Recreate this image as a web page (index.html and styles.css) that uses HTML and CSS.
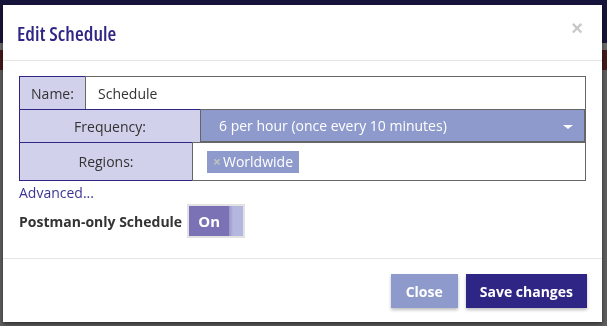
FILE: index.html
```html
<!DOCTYPE html>
<html lang="en">
<head>
  <meta charset="UTF-8">
  <title>Edit Schedule</title>
  <link rel="stylesheet" href="styles.css">
</head>
<body>

  <!-- page behind the modal -->
  <div class="page">
    <div class="page-nav"></div>
    <div class="page-strip"></div>
    <div class="page-banner"></div>
    <div class="page-body"></div>
  </div>
  <div class="backdrop"></div>

  <div class="modal">
    <div class="modal-header">
      <h4 class="modal-title">Edit Schedule</h4>
      <button class="close-x" title="Close">&times;</button>
    </div>

    <div class="modal-body">
      <div class="field-row">
        <span class="addon addon-name">Name:</span>
        <input class="field-input" type="text" value="Schedule">
      </div>
      <div class="field-row">
        <span class="addon addon-freq">Frequency:</span>
        <div class="field-select">
          <span>6 per hour (once every 10 minutes)</span>
          <span class="caret"></span>
        </div>
      </div>
      <div class="field-row field-row-tall">
        <span class="addon addon-regions">Regions:</span>
        <div class="field-input tags">
          <span class="tag"><span class="tag-x">&times;</span>Worldwide</span>
        </div>
      </div>

      <a class="advanced" href="#">Advanced...</a>

      <div class="toggle-row">
        <span class="toggle-label">Postman-only Schedule</span>
        <span class="toggle">
          <span class="toggle-on">On</span>
          <span class="toggle-off"></span>
        </span>
      </div>
    </div>

    <div class="modal-footer">
      <button class="btn btn-light">Close</button>
      <button class="btn btn-dark">Save changes</button>
    </div>
  </div>

</body>
</html>
```

FILE: styles.css
```css
:root {
  --navy: #2e2585;
  --lavender: #d1d1ec;
  --periwinkle: #8e9acb;
  --text: #333333;
  --line: #e5e5e5;
}

html, body { margin: 0; height: 100%; }
body {
  font-family: "Open Sans", "Liberation Sans", sans-serif;
  font-size: 14px;
  color: var(--text);
  overflow: hidden;
}

/* ---------- page behind ---------- */
.page { height: 100%; background: #bcbcbc; }
.page-nav { height: 43px; background: #2f2878; }
.page-strip { height: 7px; background: #d6d6d6; }
.page-banner { height: 20px; background: #8a3233; }
.backdrop {
  position: fixed;
  inset: 0;
  background: rgba(0, 0, 0, 0.5);
}

/* ---------- modal ---------- */
.modal {
  position: fixed;
  left: 3px;
  top: 5px;
  width: 599px;
  height: 317px;
  background: #fff;
  box-shadow: 0 2px 4px rgba(0, 0, 0, 0.5);
  display: flex;
  flex-direction: column;
}

.modal-header {
  display: flex;
  align-items: center;
  justify-content: space-between;
  height: 55px;
  padding: 0 19px 0 14px;
  border-bottom: 1px solid var(--line);
}
.modal-title {
  margin: 0;
  font-size: 20px;
  font-weight: 600;
  font-stretch: 82%;
  letter-spacing: 0.1px;
  color: var(--navy);
  padding-top: 1px;
}
.close-x {
  border: none;
  background: none;
  padding: 0;
  margin-top: -8px;
  font-family: "Liberation Sans", sans-serif;
  font-size: 20px;
  font-weight: bold;
  color: #c8c8c8;
}

.modal-body {
  flex: 1;
  padding: 15px 16px 0;
}

/* ---------- input rows ---------- */
.field-row {
  display: flex;
  height: 34px;
  margin-top: -1px;
}
.field-row:first-child { margin-top: 0; }
.field-row-tall { height: 39px; }

.addon {
  display: flex;
  align-items: center;
  justify-content: center;
  flex: none;
  box-sizing: border-box;
  background: var(--lavender);
  border: 1px solid var(--navy);
  border-right: none;
  color: var(--text);
}
.addon-name { width: 66px; }
.addon-freq { width: 181px; }
.addon-regions { width: 173px; }

.field-input {
  flex: 1;
  box-sizing: border-box;
  height: 100%;
  border: 1px solid #666;
  padding: 0 12px;
  font: inherit;
  color: var(--text);
  outline: none;
}

.field-select {
  flex: 1;
  display: flex;
  align-items: center;
  justify-content: space-between;
  box-sizing: border-box;
  background: var(--periwinkle);
  border: 1px solid #666;
  border-width: 1px 2px 2px 1px;
  padding: 0 11px 0 18px;
  color: #fff;
}
.caret {
  width: 0;
  height: 0;
  border-left: 5px solid transparent;
  border-right: 5px solid transparent;
  border-top: 4px solid #fff;
  margin-top: 2px;
}

.tags {
  display: flex;
  align-items: center;
  padding: 0 14px;
}
.tag {
  display: inline-flex;
  align-items: center;
  height: 22px;
  padding: 0 6px;
  background: var(--periwinkle);
  color: #fff;
}
.tag-x {
  color: #c0c0c0;
  font-weight: bold;
  margin-right: 2px;
}

.advanced {
  display: inline-block;
  margin-top: 2px;
  color: #3c3596;
  text-decoration: none;
  line-height: 20px;
}

/* ---------- toggle ---------- */
.toggle-row {
  display: flex;
  align-items: center;
  gap: 5px;
  margin-top: 1px;
}
.toggle-label { font-weight: bold; }
.toggle {
  display: flex;
  height: 30px;
  border: 2px solid #e2e2e2;
}
.toggle-on {
  width: 40px;
  display: flex;
  align-items: center;
  justify-content: center;
  background: #7b72b6;
  color: #fff;
  font-weight: bold;
  font-size: 15px;
}
.toggle-off {
  width: 14px;
  background: linear-gradient(to right, #9b94cb, #b5b8de 30%);
}

/* ---------- footer ---------- */
.modal-footer {
  display: flex;
  justify-content: flex-end;
  gap: 8px;
  padding: 15px 15px 14px;
  border-top: 1px solid var(--line);
}
.btn {
  height: 34px;
  border: none;
  padding: 0 14px;
  font-family: inherit;
  font-size: 14px;
  font-weight: bold;
  color: #fff;
  box-shadow: 0 2px 3px rgba(0, 0, 0, 0.25);
}
.btn-light { background: var(--periwinkle); padding: 0 15px; }
.btn-dark { background: var(--navy); }
```
